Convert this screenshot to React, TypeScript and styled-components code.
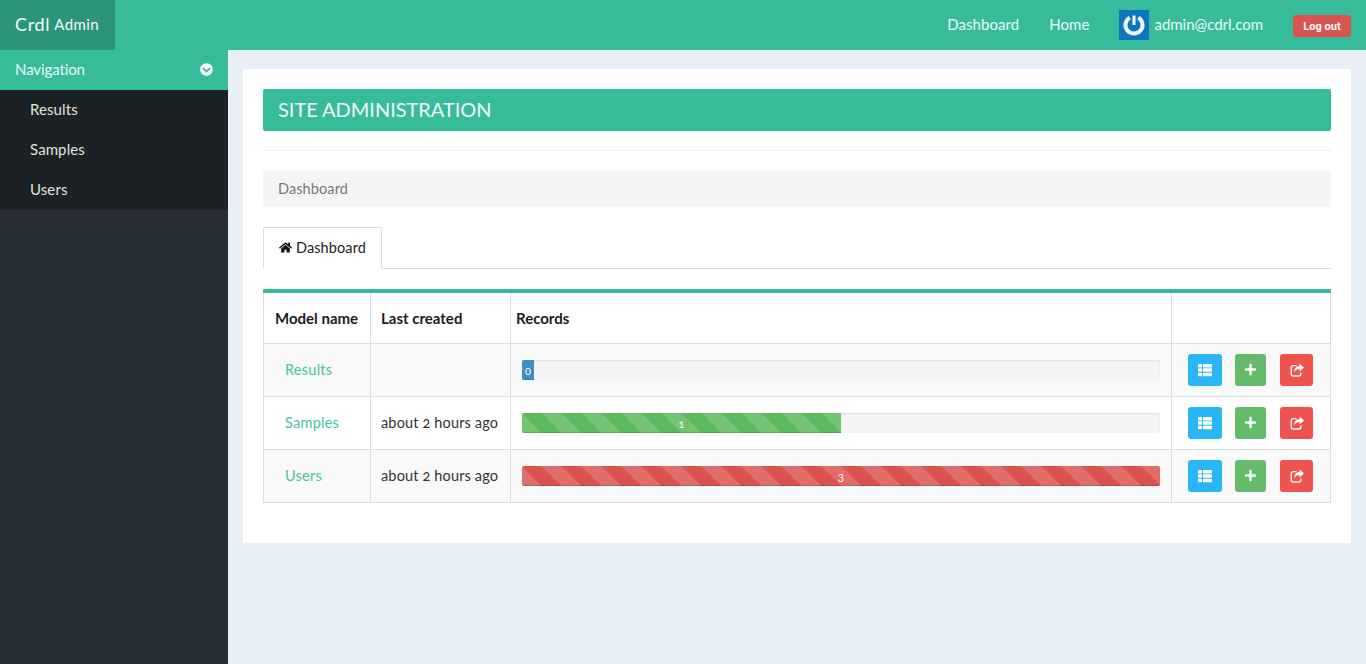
import React from 'react';
import styled, { createGlobalStyle, css } from 'styled-components';
import { FaHome, FaThList, FaPlus, FaChevronCircleDown } from 'react-icons/fa';

const Global = createGlobalStyle`
  html, body { margin: 0; padding: 0; height: 100%; overflow: hidden; }
  body { font-family: Lato, "Open Sans", "Liberation Sans", sans-serif; font-size: 15px; color: #222; background: #e9eff6; font-variant-numeric: oldstyle-nums; }
  * { box-sizing: border-box; }
`;

const Page = styled.div`display: flex; flex-direction: column; height: 664px;`;
const TopBar = styled.header`display: flex; align-items: center; height: 50px; background: #37bc9b; color: #fff; flex: none;`;
const Brand = styled.div`width: 115px; height: 50px; padding: 0 0 2px 15px; display: flex; align-items: center; background: #2b9479; font-size: 18px; letter-spacing: .7px; color: #f2fbf8; small { font-size: 15px; margin-left: 4px; letter-spacing: .4px; }`;
const TopNav = styled.nav`margin-left: auto; display: flex; align-items: center; padding-right: 15px;`;
const TopLink = styled.a`font-size: 15px; letter-spacing: .05px; color: #eafaf5; margin-right: 30px; white-space: nowrap; padding-bottom: 2px;`;
const Avatar = styled.span`width: 30px; height: 30px; background: #0f75bc; display: flex; align-items: center; justify-content: center;`;
const UserMail = styled.span`font-size: 15px; letter-spacing: 0; color: #eafaf5; margin-left: 5px; margin-right: 30px; padding-bottom: 2px;`;
const LogOut = styled.button`width: 58px; height: 22px; border: 0; border-radius: 3px; background: #d9534f; color: #fff; font: 700 11px Roboto, sans-serif; padding: 0; margin-top: 2px;`;

const Body = styled.div`display: flex; flex: 1; min-height: 0;`;
const Sidebar = styled.aside`width: 228px; flex: none; background: #272e36;`;
const NavHead = styled.div`height: 40px; background: #37bc9b; color: #eafaf5; display: flex; align-items: center; justify-content: space-between; padding: 0 15px 2px; letter-spacing: -.1px;`;
const NavList = styled.ul`list-style: none; margin: 0; padding: 0; background: #1c2125;`;
const NavItem = styled.li`height: 40px; line-height: 38px; padding-left: 30px; color: #e2e2de; letter-spacing: .1px;`;

const Main = styled.main`flex: 1; min-width: 0; padding: 19px 15px 0;`;
const Panel = styled.section`background: #fff; height: 474px; padding: 20px;`;
const Title = styled.h1`margin: 0; height: 42px; line-height: 40px; padding-left: 15px; background: #37bc9b; color: #f2fbf8; border-radius: 2px; font-size: 20px; font-weight: 400; letter-spacing: -.03px;`;
const Rule = styled.hr`border: 0; border-top: 1px solid #eeeeee; margin: 19px 0 20px;`;
const Crumb = styled.div`height: 36px; line-height: 36px; padding-left: 15px; background: #f5f5f5; color: #777; border-radius: 2px; font-size: 14.5px; letter-spacing: .1px;`;
const Tabs = styled.div`margin-top: 20px; height: 42px; border-bottom: 1px solid #ddd;`;
const Tab = styled.div`width: 119px; height: 42px; display: flex; align-items: center; gap: 4px; padding: 0 0 2px 15px; background: #fff; border: 1px solid #ddd; border-bottom-color: #fff; border-radius: 2px 2px 0 0; color: #222; font-size: 14.5px; letter-spacing: .1px; svg { font-size: 13px; color: #111; }`;

const Table = styled.table`width: 1067px; margin-top: 20px; table-layout: fixed; border-collapse: collapse; border-top: 4px solid #37bc9b;`;
const HeadCell = styled.th<{ $pad?: number; $top?: number }>`height: 52px; border: 1px solid #ddd; border-top: 0; text-align: left; font-size: 15px; font-weight: 700; color: #1c1c1c; padding: ${p => p.$top ?? 0}px 0 0 ${p => p.$pad ?? 11}px;`;
const Row = styled.tr<{ $odd?: boolean }>`background: ${p => (p.$odd ? '#f9f9f9' : '#fff')};`;
const Cell = styled.td<{ $pad?: number }>`height: 53px; border: 1px solid #ddd; padding: 0 0 0 ${p => p.$pad ?? 11}px; font-size: 14.5px; color: #333; white-space: nowrap; letter-spacing: .15px;`;
const ModelLink = styled.a`color: #48c3a4; margin-left: 10px; letter-spacing: .25px;`;
const Track = styled.div`width: 638px; height: 20px; background: #f5f5f5; border-radius: 2px; box-shadow: inset 0 1px 2px rgba(0,0,0,.1); overflow: hidden;`;
const stripes = css`background-image: linear-gradient(45deg, rgba(255,255,255,.15) 25%, transparent 25%, transparent 50%, rgba(255,255,255,.15) 50%, rgba(255,255,255,.15) 75%, transparent 75%, transparent); background-size: 40px 40px; background-position: 20px 0;`;
const Bar = styled.div<{ $color: string; $striped?: boolean }>`height: 20px; background-color: ${p => p.$color}; ${p => p.$striped && stripes}; color: #fff; font-size: 11px; line-height: 21px; text-align: center; box-shadow: inset 0 -1px 0 rgba(0,0,0,.15);`;
const Actions = styled.div`display: flex; padding-left: 5px; gap: 13px; button:last-child { margin-left: 1px; }`;
const ActionBtn = styled.button<{ $bg: string; $w: number }>`width: ${p => p.$w}px; height: 32px; border: 0; border-radius: 3px; padding: 0; background: ${p => p.$bg}; color: #fff; display: flex; align-items: center; justify-content: center; font-size: 14px;`;

const ShareIcon = () => (
  <svg width="14" height="14" viewBox="0 0 14 14">
    <path d="M6.5 2.7H3.2A2 2 0 0 0 1.2 4.7V11A2 2 0 0 0 3.2 13H8.8A2 2 0 0 0 10.8 11V9.6" fill="none" stroke="currentColor" strokeWidth="1.3" />
    <path d="M9.6 .6L14 4.6L9.6 8.6V6.2C7.2 6.2 5.2 6.6 4.4 9.6C4 6.2 5.8 3 9.6 3Z" fill="currentColor" />
  </svg>
);

const rows = [
  { name: 'Results', last: '', n: '0', pct: 12, color: '#428bca', striped: false, odd: true },
  { name: 'Samples', last: 'about 2 hours ago', n: '1', pct: 319, color: '#5cb85c', striped: true, odd: false },
  { name: 'Users', last: 'about 2 hours ago', n: '3', pct: 638, color: '#d9534f', striped: true, odd: true },
];

export default function App() {
  return (
    <Page>
      <Global />
      <TopBar>
        <Brand>Crdl<small>Admin</small></Brand>
        <TopNav>
          <TopLink>Dashboard</TopLink>
          <TopLink>Home</TopLink>
          <Avatar>
            <svg width="26" height="26" viewBox="0 0 26 26" fill="none" stroke="#f4f8fb" strokeWidth="4">
              <path d="M8.75 5.64A8.5 8.5 0 1 0 17.25 5.64" />
              <path d="M13 3.5V13" strokeWidth="3" />
            </svg>
          </Avatar>
          <UserMail>admin@cdrl.com</UserMail>
          <LogOut>Log out</LogOut>
        </TopNav>
      </TopBar>
      <Body>
        <Sidebar>
          <NavHead>Navigation <FaChevronCircleDown size={13} color="#fff" /></NavHead>
          <NavList>
            <NavItem>Results</NavItem>
            <NavItem>Samples</NavItem>
            <NavItem>Users</NavItem>
          </NavList>
        </Sidebar>
        <Main>
          <Panel>
            <Title>SITE ADMINISTRATION</Title>
            <Rule />
            <Crumb>Dashboard</Crumb>
            <Tabs><Tab><FaHome />Dashboard</Tab></Tabs>
            <Table>
              <colgroup>
                <col width="107" /><col width="140" /><col width="661" /><col width="159" />
              </colgroup>
              <thead>
                <tr>
                  <HeadCell>Model name</HeadCell>
                  <HeadCell $pad={10}>Last created</HeadCell>
                  <HeadCell $pad={5}>Records</HeadCell>
                  <HeadCell />
                </tr>
              </thead>
              <tbody>
                {rows.map(r => (
                  <Row key={r.name} $odd={r.odd}>
                    <Cell><ModelLink>{r.name}</ModelLink></Cell>
                    <Cell $pad={10}>{r.last}</Cell>
                    <Cell>
                      <Track>
                        <Bar $color={r.color} $striped={r.striped} style={{ width: r.pct }}>{r.n}</Bar>
                      </Track>
                    </Cell>
                    <Cell>
                      <Actions>
                        <ActionBtn $bg="#29b6f6" $w={34}><FaThList /></ActionBtn>
                        <ActionBtn $bg="#66bb6a" $w={31}><FaPlus size={13} /></ActionBtn>
                        <ActionBtn $bg="#ef5350" $w={33}><ShareIcon /></ActionBtn>
                      </Actions>
                    </Cell>
                  </Row>
                ))}
              </tbody>
            </Table>
          </Panel>
        </Main>
      </Body>
    </Page>
  );
}
